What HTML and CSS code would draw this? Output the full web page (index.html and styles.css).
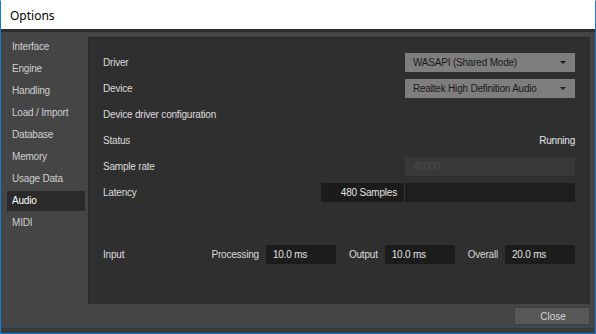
FILE: index.html
```html
<!DOCTYPE html>
<html>
<head>
<meta charset="utf-8">
<link rel="stylesheet" href="styles.css">
</head>
<body>
<div class="window">
  <div class="titlebar">Options</div>
  <div class="content">
    <nav class="sidebar">
      <div class="nav-item">Interface</div>
      <div class="nav-item">Engine</div>
      <div class="nav-item">Handling</div>
      <div class="nav-item">Load / Import</div>
      <div class="nav-item">Database</div>
      <div class="nav-item">Memory</div>
      <div class="nav-item">Usage Data</div>
      <div class="nav-item active">Audio</div>
      <div class="nav-item">MIDI</div>
    </nav>
    <main class="panel">
      <div class="row">
        <span class="label">Driver</span>
        <div class="dropdown"><span>WASAPI (Shared Mode)</span><svg class="arrow" width="6" height="3" viewBox="0 0 6 3"><path d="M0 0H6L3 3Z" fill="#1c1c1c"/></svg></div>
      </div>
      <div class="row">
        <span class="label">Device</span>
        <div class="dropdown"><span>Realtek High Definition Audio</span><svg class="arrow" width="6" height="3" viewBox="0 0 6 3"><path d="M0 0H6L3 3Z" fill="#1c1c1c"/></svg></div>
      </div>
      <div class="row">
        <span class="label">Device driver configuration</span>
      </div>
      <div class="row">
        <span class="label">Status</span>
        <span class="value">Running</span>
      </div>
      <div class="row">
        <span class="label">Sample rate</span>
        <div class="field disabled">48000</div>
      </div>
      <div class="row">
        <span class="label">Latency</span>
        <div class="latency">
          <div class="latency-value">480 Samples</div>
          <div class="latency-slider"></div>
        </div>
      </div>
      <div class="row input-row">
        <span class="label">Input</span>
        <div class="timings">
          <div class="timing"><span class="timing-label">Processing</span><div class="timing-box">10.0 ms</div></div>
          <div class="timing"><span class="timing-label">Output</span><div class="timing-box">10.0 ms</div></div>
          <div class="timing"><span class="timing-label">Overall</span><div class="timing-box">20.0 ms</div></div>
        </div>
      </div>
    </main>
  </div>
  <div class="footer">
    <button class="close-btn">Close</button>
  </div>
  <div class="bottom-strip"></div>
</div>
</body>
</html>
```
FILE: styles.css
```css
html, body {
  margin: 0;
  padding: 0;
  background: #ffffff;
}

.window {
  width: 596px;
  height: 334px;
  box-sizing: border-box;
  border: 1px solid #1979ca;
  border-top-color: #ffffff;
  display: flex;
  flex-direction: column;
  background: #454545;
  font-family: "Liberation Sans", Arial, sans-serif;
  font-size: 10px;
  letter-spacing: -0.2px;
  color: #dadada;
  overflow: hidden;
}

.titlebar {
  height: 28px;
  flex: none;
  background: #ffffff;
  color: #000000;
  font-family: "Noto Sans", "Open Sans", sans-serif;
  font-size: 12px;
  letter-spacing: 0;
  line-height: 30px;
  padding-left: 9px;
}

.content {
  flex: none;
  height: 275px;
  display: flex;
  border-top: 3px solid #2e2e2e;
  box-sizing: border-box;
  padding-top: 5px;
}

.sidebar {
  width: 87px;
  flex: none;
  display: flex;
  flex-direction: column;
  gap: 2px;
}

.nav-item {
  height: 20px;
  line-height: 20px;
  margin-left: 6px;
  width: 78px;
  padding-left: 5px;
  box-sizing: border-box;
  color: #cfcfcf;
}

.nav-item.active {
  background: #2a2a2a;
  color: #ffffff;
}

.panel {
  width: 502px;
  flex: none;
  background: #2f2f2f;
  border-top: 1px solid #272727;
  border-left: 1px solid #2a2a2a;
  border-right: 1px solid #2a2a2a;
  box-sizing: border-box;
  padding: 14px 14px 0 14px;
  display: flex;
  flex-direction: column;
  gap: 6px;
}

.row {
  height: 20px;
  display: flex;
  align-items: center;
  justify-content: space-between;
}

.label {
  color: #dcdcdc;
}

.value {
  color: #e4e4e4;
}

.dropdown {
  width: 170px;
  height: 19px;
  background: #7e7e7e;
  color: #1a1a1a;
  display: flex;
  align-items: center;
  justify-content: space-between;
  padding: 0 9px 0 8px;
  box-sizing: border-box;
}

.arrow {
  display: block;
}

.field {
  width: 170px;
  height: 19px;
  line-height: 19px;
  padding-left: 8px;
  box-sizing: border-box;
}

.field.disabled {
  background: #383838;
  color: #4c4c4c;
}

.latency {
  display: flex;
  height: 19px;
}

.latency-value {
  width: 84px;
  background: #1b1b1b;
  color: #e2e2e2;
  text-align: right;
  padding-right: 7px;
  line-height: 19px;
  box-sizing: border-box;
  border-right: 1px solid #363636;
}

.latency-slider {
  width: 170px;
  background: #1e1e1e;
}

.input-row {
  margin-top: 36px;
}

.timings {
  display: flex;
  gap: 13px;
}

.timing {
  display: flex;
  align-items: center;
  gap: 7px;
}

.timing-box {
  width: 70px;
  height: 19px;
  line-height: 19px;
  background: #1c1c1c;
  color: #e2e2e2;
  padding-left: 7px;
  box-sizing: border-box;
}

.footer {
  flex: none;
  height: 23px;
  display: flex;
  justify-content: flex-end;
  align-items: flex-start;
  padding: 3px 5px 0 0;
  box-sizing: border-box;
  background: #454545;
}

.close-btn {
  width: 76px;
  height: 18px;
  background: #585858;
  border: 1px solid #3e3e3e;
  color: #d6d6d6;
  font-family: "Liberation Sans", Arial, sans-serif;
  font-size: 10px;
  padding: 0;
  padding-left: 2px;
}

.bottom-strip {
  flex: 1;
  background: #3b3b3b;
  border-top: 1px solid #30475c;
}
```
